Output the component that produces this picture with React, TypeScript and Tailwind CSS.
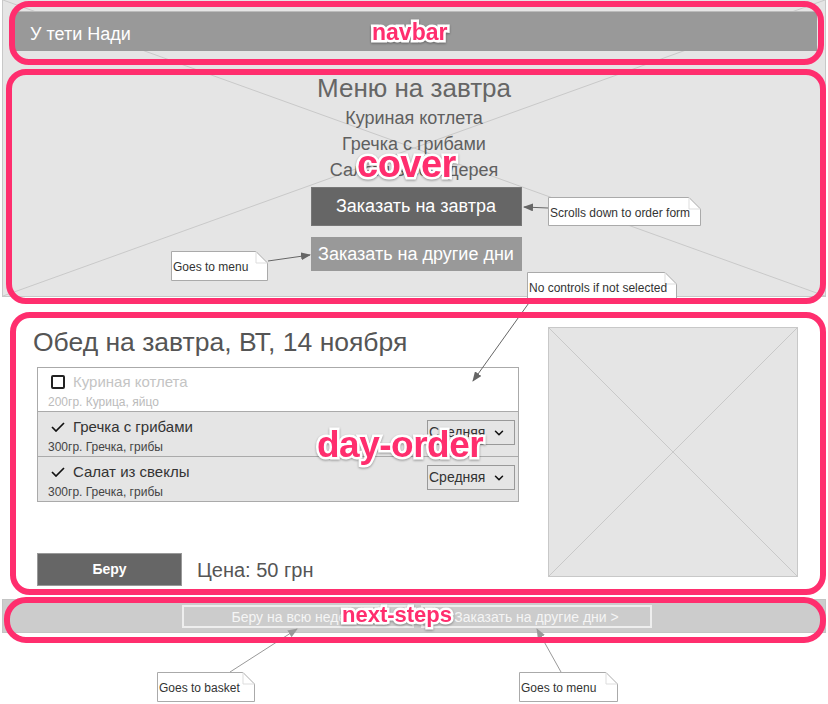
import { ChevronDown } from "lucide-react";

interface Dish {
  name: string;
  info: string;
  selected: boolean;
}

const dishes: Dish[] = [
  { name: "Куриная котлета", info: "200гр. Курица, яйцо", selected: false },
  { name: "Гречка с грибами", info: "300гр. Гречка, грибы", selected: true },
  { name: "Салат из свеклы", info: "300гр. Гречка, грибы", selected: true },
];

function CrossLines() {
  return (
    <svg
      className="absolute inset-0 h-full w-full"
      viewBox="0 0 100 100"
      preserveAspectRatio="none"
      aria-hidden="true"
    >
      <line x1="0" y1="0" x2="100" y2="100" stroke="#c9c9c9" strokeWidth="1" vectorEffect="non-scaling-stroke" />
      <line x1="0" y1="100" x2="100" y2="0" stroke="#c9c9c9" strokeWidth="1" vectorEffect="non-scaling-stroke" />
    </svg>
  );
}

function DishRow({ dish }: { dish: Dish }) {
  return (
    <div
      className={
        dish.selected
          ? "flex h-[45px] items-start justify-between border-t border-[#aaa] bg-[#e5e5e5] pl-[10px] pr-[3px] pt-[6px]"
          : "flex h-[43px] items-start justify-between bg-white pl-[10px] pr-[3px] pt-[5px]"
      }
    >
      <div>
        <div className="flex h-[18px] items-center gap-[8px] pl-[3px]">
          {dish.selected ? (
            <svg width="14" height="10" viewBox="0 0 14 10" aria-hidden="true">
              <polyline points="1,5 5,9 13,1" fill="none" stroke="#111" strokeWidth="1.7" />
            </svg>
          ) : (
            <div className="h-[14px] w-[14px] rounded-[2px] border-2 border-[#222]" />
          )}
          <span className={dish.selected ? "text-[15px] text-[#333]" : "text-[15px] text-[#c4c4c4]"}>
            {dish.name}
          </span>
        </div>
        <p
          className={
            dish.selected
              ? "mt-[4px] text-[12px] leading-[14px] text-[#444]"
              : "mt-[4px] text-[12px] leading-[14px] text-[#bbb]"
          }
        >
          {dish.info}
        </p>
      </div>
      {dish.selected && (
        <div className="mt-[2px] flex h-[25px] w-[88px] items-center justify-between border border-[#999] pl-[1px] pr-[8px] text-[14px] text-[#333]">
          Средняя
          <ChevronDown size={14} strokeWidth={2.6} className="text-[#111]" />
        </div>
      )}
    </div>
  );
}

function Note({
  w,
  h,
  className,
  children,
}: {
  w: number;
  h: number;
  className: string;
  children: string;
}) {
  return (
    <div className={`absolute flex items-center whitespace-nowrap pl-[2px] pt-[2px] text-[12px] text-[#333] ${className}`}>
      <svg className="absolute left-0 top-0" width={w} height={h} aria-hidden="true">
        <path d={`M0.5 0.5H${w - 12}L${w - 0.5} 12V${h - 0.5}H0.5Z`} fill="#fff" stroke="#aaa" />
        <path d={`M${w - 12} 0.5V12H${w - 0.5}`} fill="none" stroke="#ddd" />
      </svg>
      <span className="relative">{children}</span>
    </div>
  );
}

function Arrows() {
  return (
    <svg className="absolute left-0 top-0" width="828" height="704" aria-hidden="true">
      <defs>
        <marker id="head-dark" markerWidth="10" markerHeight="8" refX="9" refY="4" orient="auto" markerUnits="userSpaceOnUse">
          <path d="M0 0L10 4L0 8z" fill="#666" />
        </marker>
        <marker id="head-light" markerWidth="10" markerHeight="8" refX="9" refY="4" orient="auto" markerUnits="userSpaceOnUse">
          <path d="M0 0L10 4L0 8z" fill="#999" />
        </marker>
      </defs>
      <line x1="548" y1="208" x2="524" y2="207" stroke="#666" markerEnd="url(#head-dark)" />
      <line x1="268" y1="261" x2="310" y2="255" stroke="#666" markerEnd="url(#head-dark)" />
      <line x1="531" y1="300" x2="473" y2="381" stroke="#666" markerEnd="url(#head-dark)" />
      <line x1="230" y1="672" x2="297" y2="629" stroke="#999" markerEnd="url(#head-light)" />
      <line x1="561" y1="672" x2="537" y2="629" stroke="#999" markerEnd="url(#head-light)" />
    </svg>
  );
}

const labelClass =
  "absolute font-bold leading-none whitespace-nowrap text-[#ff2e6e] [-webkit-text-stroke:5px_white] [paint-order:stroke_fill] drop-shadow-[0_1px_1px_rgba(0,0,0,0.35)]";

export default function App() {
  return (
    <div className="relative h-[704px] w-[828px] overflow-hidden bg-white font-['Liberation_Sans',Arial,sans-serif]">
      {/* cover with navbar */}
      <header className="relative mx-[2px] flex h-[297px] flex-col items-center border-x border-b border-[#c8c8c8] bg-[#e5e5e5]">
        <CrossLines />
        <nav className="relative ml-[12px] mt-[11px] h-[40px] w-[802px] self-start border-t border-[#bbb] bg-[#999] pl-[15px] pt-[12px] text-[18px] leading-[20px] text-white">
          У тети Нади
        </nav>
        <div className="relative mt-[22px] flex flex-col items-center text-[#5f5f5f]">
          <h1 className="text-[26px] leading-[30px] text-[#666]">Меню на завтра</h1>
          <ul className="mt-[2px] text-center text-[18px] leading-[26px]">
            <li>Куриная котлета</li>
            <li>Гречка с грибами</li>
            <li>Салат из сельдерея</li>
          </ul>
          <button className="ml-[4px] mt-[4px] h-[39px] w-[211px] border border-[#777] bg-[#666] text-[18px] text-white">
            Заказать на завтра
          </button>
          <button className="ml-[4px] mt-[11px] h-[34px] w-[211px] bg-[#999] text-[18px] text-white">
            Заказать на другие дни
          </button>
        </div>
      </header>

      {/* day order */}
      <section className="flex h-[302px] pl-[33px] pt-[30px]">
        <div className="w-[515px]">
          <h2 className="text-[26.5px] leading-[30px] text-[#555]">Обед на завтра, ВТ, 14 ноября</h2>
          <div className="ml-[4px] mt-[10px] w-[482px] border border-[#aaa]">
            {dishes.map((dish) => (
              <DishRow key={dish.name} dish={dish} />
            ))}
          </div>
          <div className="ml-[4px] mt-[51px] flex items-center gap-[15px]">
            <button className="h-[33px] w-[145px] border border-[#999] bg-[#666] text-[14px] font-bold text-white">
              Беру
            </button>
            <span className="text-[20px] text-[#555]">Цена: 50 грн</span>
          </div>
        </div>
        <div className="relative h-[250px] w-[250px] border border-[#c8c8c8] bg-[#e5e5e5]">
          <CrossLines />
        </div>
      </section>

      {/* next steps */}
      <footer className="mx-[2px] flex h-[34px] items-center border border-[#c4c4c4] bg-[#ccc] pl-[179px] text-[14px] text-[#f5f5f5]">
        <button className="h-[23px] w-[232px] border-2 border-[#eee]">Беру на всю неделю</button>
        <button className="ml-[7px] h-[23px] w-[231px] border-2 border-[#eee]">Заказать на другие дни &gt;</button>
      </footer>

      {/* annotations */}
      <div className="pointer-events-none absolute inset-0">
        <Note w={153} h={29} className="left-[548px] top-[197px] h-[29px] w-[153px]">
          Scrolls down to order form
        </Note>
        <Note w={97} h={30} className="left-[171px] top-[251px] h-[30px] w-[97px]">
          Goes to menu
        </Note>
        <Note w={150} h={30} className="left-[527px] top-[272px] h-[30px] w-[150px]">
          No controls if not selected
        </Note>
        <Note w={98} h={30} className="left-[157px] top-[672px] h-[30px] w-[98px]">
          Goes to basket
        </Note>
        <Note w={99} h={30} className="left-[519px] top-[672px] h-[30px] w-[99px]">
          Goes to menu
        </Note>
        <Arrows />

        <div className="absolute left-[9px] top-[1px] h-[64px] w-[815px] rounded-[20px] border-[6px] border-[#ff2e6e]" />
        <div className="absolute left-[6px] top-[69px] h-[235px] w-[820px] rounded-[20px] border-[6px] border-[#ff2e6e]" />
        <div className="absolute left-[10px] top-[312px] h-[283px] w-[816px] rounded-[20px] border-[6px] border-[#ff2e6e]" />
        <div className="absolute left-[4px] top-[597px] h-[46px] w-[822px] rounded-[22px] border-[6px] border-[#ff2e6e]" />

        <span className={`${labelClass} left-[372px] top-[21px] text-[23px]`}>navbar</span>
        <span className={`${labelClass} left-[357px] top-[145px] text-[38px] tracking-[-0.5px]`}>cover</span>
        <span className={`${labelClass} left-[317px] top-[426px] text-[37px] tracking-[-0.5px]`}>day-order</span>
        <span className={`${labelClass} left-[342px] top-[604px] text-[22px]`}>next-steps</span>
      </div>
    </div>
  );
}
